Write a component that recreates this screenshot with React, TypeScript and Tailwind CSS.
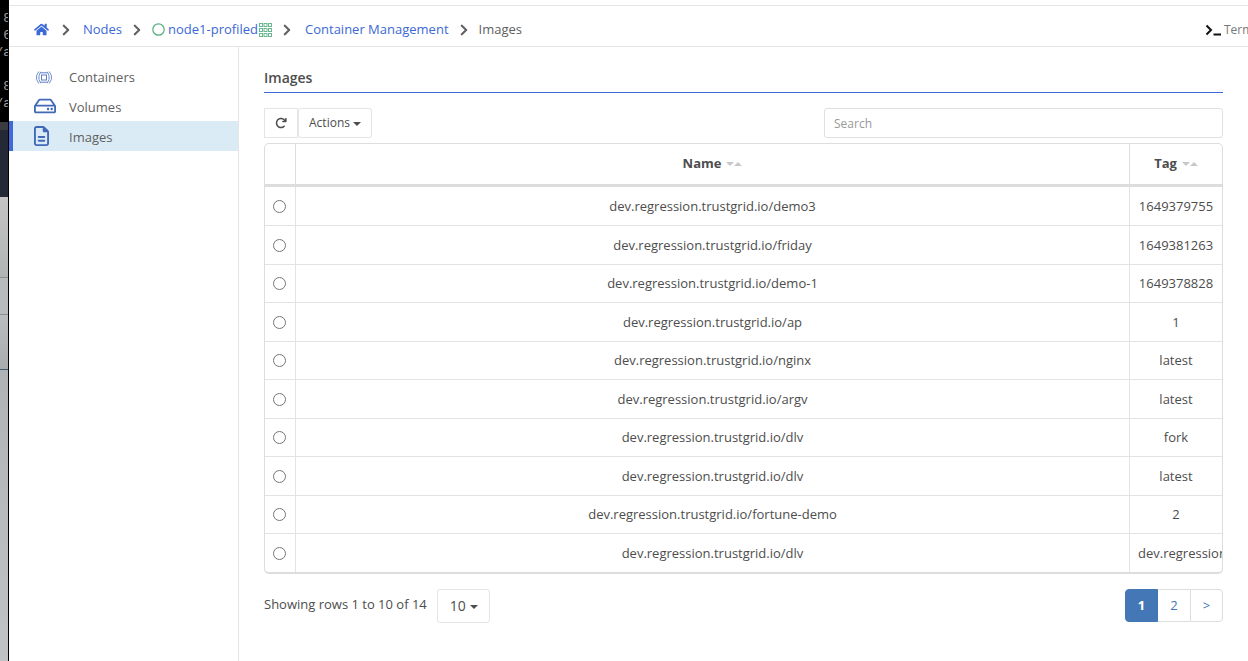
import { FaChevronRight, FaHome, FaRegHdd } from "react-icons/fa";
import { FaArrowRotateRight, FaRegFileLines } from "react-icons/fa6";

const images = [
  { name: "dev.regression.trustgrid.io/demo3", tag: "1649379755" },
  { name: "dev.regression.trustgrid.io/friday", tag: "1649381263" },
  { name: "dev.regression.trustgrid.io/demo-1", tag: "1649378828" },
  { name: "dev.regression.trustgrid.io/ap", tag: "1" },
  { name: "dev.regression.trustgrid.io/nginx", tag: "latest" },
  { name: "dev.regression.trustgrid.io/argv", tag: "latest" },
  { name: "dev.regression.trustgrid.io/dlv", tag: "fork" },
  { name: "dev.regression.trustgrid.io/dlv", tag: "latest" },
  { name: "dev.regression.trustgrid.io/fortune-demo", tag: "2" },
  { name: "dev.regression.trustgrid.io/dlv", tag: "dev.regression" },
];

function Caret() {
  return (
    <svg width="8" height="4" viewBox="0 0 8 4" fill="currentColor" aria-hidden="true">
      <path d="M0 0h8L4 4z" />
    </svg>
  );
}

function Sort() {
  return (
    <svg width="16" height="4" viewBox="0 0 16 4" fill="#c8c8c8" aria-hidden="true">
      <path d="M0 0h8L4 4zM8 4h8L12 0z" />
    </svg>
  );
}

function Separator() {
  return (
    <span className="mx-[11px] flex">
      <FaChevronRight className="h-3.5 w-2 shrink-0 text-[#606060]" aria-hidden="true" />
    </span>
  );
}

function GridIcon() {
  return (
    <svg width="13" height="14" viewBox="0 0 13 14" fill="none" stroke="#6ab890" aria-hidden="true">
      {[0.5, 5.5, 10.5].map((y) =>
        [0.5, 5, 9.5].map((x) => <rect key={`${x}-${y}`} x={x} y={y} width="3" height="3" />)
      )}
    </svg>
  );
}

function ContainerIcon() {
  return (
    <svg width="16" height="13" viewBox="0 0 16 13" fill="none" stroke="#5f7fc6" aria-hidden="true">
      <rect x="5.500" y="4" width="5" height="5" />
      <path d="M4.500 1.800h7M4.500 11.200h7" />
      <path d="M2.800.5L.6 4.500v4l2.200 4M13.200.5l2.200 4v4l-2.200 4" strokeWidth=".9" />
      <path d="M4.700.8L3 4.500v4l1.700 3.700M11.300.8L13 4.500v4l-1.700 3.700" strokeWidth=".9" />
    </svg>
  );
}

function Background() {
  return (
    <div className="flex w-[9px] shrink-0 flex-col overflow-hidden border-r border-black bg-[#bfc1c1]" aria-hidden="true">
      <div className="flex h-[122px] shrink-0 flex-col overflow-hidden bg-black pt-2.5 font-['Liberation_Mono'] text-[13px] leading-[17px] text-[#a0a0a0]">
        <div className="-mr-[3px] flex flex-col items-end">
          <span>8</span>
          <span>6</span>
          <span>/a</span>
          <span className="h-[17px]" />
          <span>8</span>
          <span>/a</span>
        </div>
      </div>
      <div className="h-2 shrink-0 bg-[#3c3c40]" />
      <div className="h-[67px] shrink-0 bg-[#252835]" />
      <div className="h-[81px] shrink-0 border-b border-[#8f8f8f] bg-linear-to-b from-[#c4c4c4] to-[#b2b4b4]" />
      <div className="h-[37px] shrink-0 border-b border-[#8f8f8f] bg-[#b8bbbb]" />
      <div className="h-[55px] shrink-0 border-b border-[#3d5a78] bg-linear-to-b from-[#b9bdbf] to-[#a9acad]" />
      <div className="grow bg-linear-to-b from-[#b0b3b5] to-[#c0c2c4]" />
    </div>
  );
}

const navLink = "flex h-[30px] items-center border-l-4 pl-[21px] text-[#606060]";

export default function App() {
  return (
    <div className="flex min-h-screen overflow-hidden bg-white font-['Open_Sans',sans-serif] text-[13px] text-[#4d4d4d]">
      <Background />
      <div className="flex min-w-0 grow flex-col pt-[5px]">
        <header className="flex h-[42px] shrink-0 items-center overflow-hidden border-y border-[#e5e5e5] pt-[7px]">
          <nav aria-label="Breadcrumb" className="flex grow items-center pl-[25px] text-[#3b69d6]">
            <a href="#home" aria-label="Home" className="pr-0.5">
              <FaHome className="size-[15px]" />
            </a>
            <Separator />
            <a href="#nodes" className="pl-0.5">Nodes</a>
            <Separator />
            <a href="#node" className="flex items-center">
              <svg className="mr-[3px]" width="13" height="13" viewBox="0 0 13 13" fill="none" stroke="#55ad80" strokeWidth="1.2" aria-hidden="true">
                <circle cx="6.500" cy="6.500" r="5.700" />
              </svg>
              <span className="mr-px">node1-profiled</span>
              <GridIcon />
            </a>
            <Separator />
            <a href="#management" className="pl-[3px]">Container Management</a>
            <Separator />
            <span className="text-[#606060]">Images</span>
          </nav>
          <button type="button" className="flex w-[43px] shrink-0 items-center gap-0.5 overflow-hidden text-xs text-[#777]">
            <svg className="shrink-0" width="17" height="12" viewBox="0 0 17 12" fill="none" stroke="#111" strokeWidth="2" aria-hidden="true">
              <path d="M1.500 1.500L6 6l-4.500 4.500M8.500 10.500H16" />
            </svg>
            Terminal
          </button>
        </header>
        <div className="flex grow">
          <nav aria-label="Container management" className="w-[230px] shrink-0 border-r border-[#e5e5e5] pt-3.5">
            <a href="#containers" className={`${navLink} border-transparent`}>
              <span className="flex w-[35px] pt-0.5 pl-0.5"><ContainerIcon /></span>
              <span className="pt-[3px]">Containers</span>
            </a>
            <a href="#volumes" className={`${navLink} border-transparent`}>
              <span className="w-[35px] text-[#4169b8]"><FaRegHdd className="size-[22px]" /></span>
              <span className="pt-[3px]">Volumes</span>
            </a>
            <a href="#images" aria-current="page" className={`${navLink} border-[#4169d8] bg-[#dbebf6]`}>
              <span className="w-[35px] text-[#4169b8]"><FaRegFileLines className="h-5 w-[15px]" /></span>
              <span className="pt-[3px]">Images</span>
            </a>
          </nav>
          <main className="min-w-0 grow px-[25px] pt-5">
            <h1 className="h-[26px] border-b border-[#3b69d6] text-sm leading-[22px] font-semibold">Images</h1>
            <div className="mt-[15px] flex h-[30px] justify-between">
              <div className="flex text-xs">
                <button type="button" aria-label="Refresh" className="flex w-[34px] items-center justify-center border border-[#e5e5e5]">
                  <FaArrowRotateRight className="size-3" />
                </button>
                <button type="button" className="flex w-[74px] items-center justify-center gap-[3px] rounded-[3px] border border-[#e5e5e5]">
                  Actions <span className="pt-0.5"><Caret /></span>
                </button>
              </div>
              <input aria-label="Search" placeholder="Search" className="w-[399px] rounded-[3px] border border-[#e0e0e0] px-[9px] pt-0.5 text-xs placeholder:text-[#999]" />
            </div>
            <div className="mt-[5px] overflow-hidden rounded-[5px] border border-b-2 border-[#dddddd]">
              <table className="w-full table-fixed border-separate border-spacing-0 text-center">
                <thead>
                  <tr className="h-[43px]">
                    <th className="w-[31px] border-r border-b-3 border-[#dddddd] p-0" aria-label="Select" />
                    <th className="border-r border-b-3 border-[#dddddd] p-0 font-bold">
                      <span className="flex items-center justify-center gap-[5px]">Name <Sort /></span>
                    </th>
                    <th className="w-[92px] border-b-3 border-[#dddddd] p-0 font-bold">
                      <span className="flex items-center justify-center gap-[5px]">Tag <Sort /></span>
                    </th>
                  </tr>
                </thead>
                <tbody className="[&_td]:border-b [&_td]:border-[#e3e3e3] [&_tr:last-child>td]:border-b-0">
                  {images.map((image, index) => (
                    <tr key={index} className={index === 0 || (index % 2 === 1 && index < images.length - 1) ? "h-[39px]" : "h-[38px]"}>
                      <td className="border-r py-0 pr-0.5 pl-0">
                        <input type="radio" name="image" aria-label={`${image.name}:${image.tag}`} className="mx-auto block size-[13px] appearance-none rounded-full border border-[#767676] checked:border-4 checked:border-[#3b69d6]" />
                      </td>
                      <td className="border-r px-0 pt-px pb-0">{image.name}</td>
                      <td className="overflow-hidden px-2 pt-px pb-0 whitespace-nowrap">{image.tag}</td>
                    </tr>
                  ))}
                </tbody>
              </table>
            </div>
            <div className="mt-[15px] flex items-start justify-between">
              <div className="flex gap-2.5">
                <span className="leading-[30px]">Showing rows 1 to 10 of 14</span>
                <span className="relative flex items-center">
                  <select aria-label="Rows per page" defaultValue="10" className="h-[34px] w-[53px] appearance-none rounded-[3px] border border-[#e5e5e5] pl-3 text-sm">
                    <option>10</option>
                    <option>25</option>
                    <option>50</option>
                  </select>
                  <span className="pointer-events-none absolute right-3 pt-0.5"><Caret /></span>
                </span>
              </div>
              <nav aria-label="Pagination" className="flex h-[33px] text-[#4377b5]">
                <button type="button" aria-current="page" className="w-[33px] rounded-l-[4px] border border-[#4377b5] bg-[#4377b5] font-bold text-white">1</button>
                <button type="button" className="w-8 border-y border-[#dddddd]">2</button>
                <button type="button" className="w-[33px] rounded-r-[4px] border border-[#dddddd]">&gt;</button>
              </nav>
            </div>
          </main>
        </div>
      </div>
    </div>
  );
}
